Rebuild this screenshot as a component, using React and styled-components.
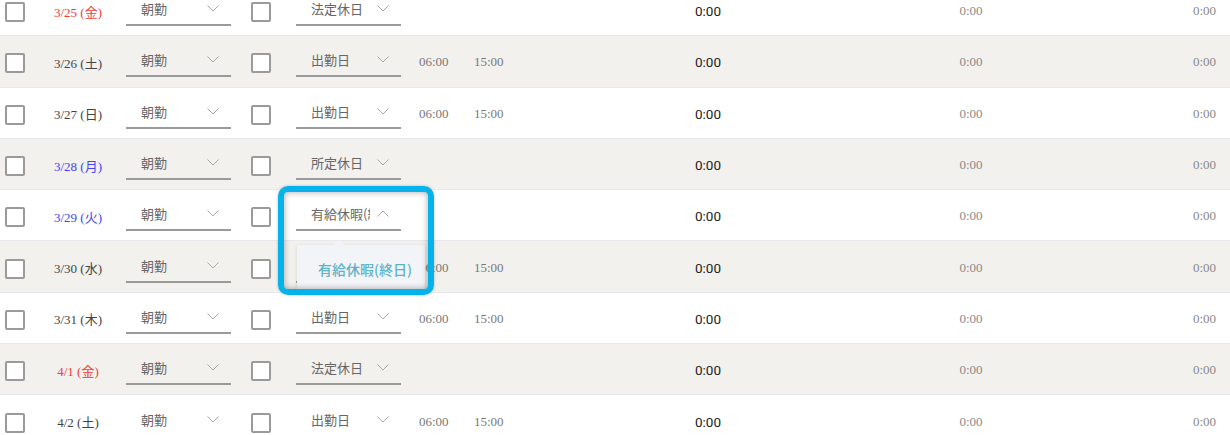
import React from "react";
import styled, { createGlobalStyle } from "styled-components";

const GlobalStyle = createGlobalStyle`
  html, body {
    margin: 0;
    padding: 0;
    background: #fff;
  }
  body {
    font-family: "Liberation Serif", "Noto Sans CJK JP", serif;
  }
`;

const rows = [
  { date: "3/25 (金)", tone: "red", type: "法定休日" },
  { date: "3/26 (土)", type: "出勤日", start: "06:00", end: "15:00" },
  { date: "3/27 (日)", type: "出勤日", start: "06:00", end: "15:00" },
  { date: "3/28 (月)", tone: "blue", type: "所定休日" },
  { date: "3/29 (火)", tone: "blue", type: "有給休暇(終日)", open: true },
  { date: "3/30 (水)", type: "出勤日", start: "06:00", end: "15:00" },
  { date: "3/31 (木)", type: "出勤日", start: "06:00", end: "15:00" },
  { date: "4/1 (金)", tone: "red", type: "法定休日" },
  { date: "4/2 (土)", type: "出勤日", start: "06:00", end: "15:00" },
];

const toneColor = {
  red: "#ec3b3b",
  blue: "#4444f2",
  plain: "#444",
};

const Chevron = ({ up }) => (
  <svg width="12" height="7" viewBox="0 0 12 7">
    <polyline
      points={up ? "0.5,6.5 6,1 11.5,6.5" : "0.5,0.5 6,6 11.5,0.5"}
      fill="none"
      stroke="#a8a8a8"
      strokeWidth="1"
    />
  </svg>
);

export default function App() {
  return (
    <Page>
      <GlobalStyle />
      <Table>
        {rows.map((r, i) => (
          <Row key={r.date} $shaded={i % 2 === 1}>
            <CheckCell>
              <Box />
            </CheckCell>
            <DateCell $tone={r.tone || "plain"}>{r.date}</DateCell>
            <Select>
              <SelectText>朝勤</SelectText>
              <Chevron />
            </Select>
            <CheckCell $wide>
              <Box />
            </CheckCell>
            <Select>
              <SelectText $clip={r.open}>{r.type}</SelectText>
              <Chevron up={r.open} />
              {r.open && (
                <Menu>
                  <MenuItem>有給休暇(終日)</MenuItem>
                </Menu>
              )}
            </Select>
            <TimeCell>{r.start}</TimeCell>
            <TimeCell>{r.end}</TimeCell>
            <TotalCell>0:00</TotalCell>
            <SubCell>0:00</SubCell>
            <LastCell>0:00</LastCell>
            {r.open && <Highlight />}
          </Row>
        ))}
      </Table>
    </Page>
  );
}

const Page = styled.div`
  width: 1230px;
  height: 435px;
  overflow: hidden;
  position: relative;
`;

const Table = styled.div`
  margin-top: -15px;
  display: flex;
  flex-direction: column;
`;

const Row = styled.div`
  position: relative;
  height: 50.3px;
  flex-shrink: 0;
  border-bottom: 1px solid #e8e8ee;
  background: ${(p) => (p.$shaded ? "#f2f1ee" : "#fff")};
  display: flex;
  align-items: center;
`;

const CheckCell = styled.div`
  width: ${(p) => (p.$wide ? "65px" : "30px")};
  padding-left: ${(p) => (p.$wide ? "20px" : "5px")};
  box-sizing: border-box;
  display: flex;
  padding-top: 4px;
`;

const Box = styled.div`
  width: 20px;
  height: 20px;
  box-sizing: border-box;
  border: 2px solid #9a9a9a;
  border-radius: 2px;
  background: #fff;
`;

const DateCell = styled.div`
  width: 96px;
  text-align: center;
  font-size: 13px;
  padding-top: 2px;
  color: ${(p) => toneColor[p.$tone]};
`;

const Select = styled.div`
  position: relative;
  width: 105px;
  height: 32px;
  box-sizing: border-box;
  border-bottom: 2px solid #9a9a9a;
  padding: 0 12px 1px 15px;
  display: flex;
  align-items: center;
  justify-content: space-between;
  font-family: "Noto Sans CJK JP", sans-serif;
  font-size: 13px;
  color: #666;
`;

const SelectText = styled.span`
  white-space: nowrap;
  overflow: hidden;
  max-width: ${(p) => (p.$clip ? "59px" : "none")};
`;

const Menu = styled.div`
  position: absolute;
  top: 46px;
  left: 1px;
  width: 128px;
  height: 48px;
  background: #f3f4f8;
  box-shadow: 0 1px 4px rgba(0, 0, 0, 0.12);
  display: flex;
  align-items: center;
  z-index: 2;

  &:before {
    content: "";
    position: absolute;
    top: -5px;
    left: 37px;
    border-left: 5px solid transparent;
    border-right: 5px solid transparent;
    border-bottom: 5px solid #f3f4f8;
  }
`;

const MenuItem = styled.span`
  padding-left: 21px;
  font-family: "Noto Sans CJK JP", sans-serif;
  font-size: 14px;
  font-weight: 500;
  color: #5cb3c8;
`;

const TimeCell = styled.div`
  width: 55px;
  box-sizing: border-box;
  padding-left: 18px;
  font-size: 13px;
  color: #777;
  padding-top: 2px;
`;

const TotalCell = styled.div`
  width: 394px;
  text-align: center;
  font-family: Roboto, "Noto Sans", sans-serif;
  font-size: 13.5px;
  color: #222;
  padding-top: 2px;
`;

const SubCell = styled.div`
  width: 132px;
  text-align: center;
  font-size: 13px;
  color: #888;
  padding-top: 2px;
`;

const LastCell = styled.div`
  flex: 1;
  text-align: right;
  padding-right: 14px;
  font-size: 13px;
  color: #888;
  padding-top: 2px;
`;

const Highlight = styled.div`
  position: absolute;
  left: 278px;
  top: -4px;
  width: 156px;
  height: 109px;
  box-sizing: border-box;
  border: 6px solid #05b2ea;
  border-radius: 10px;
  box-shadow: inset 0 0 6px rgba(0, 0, 0, 0.35), 0 0 3px rgba(0, 0, 0, 0.25);
  z-index: 3;
  pointer-events: none;
`;
